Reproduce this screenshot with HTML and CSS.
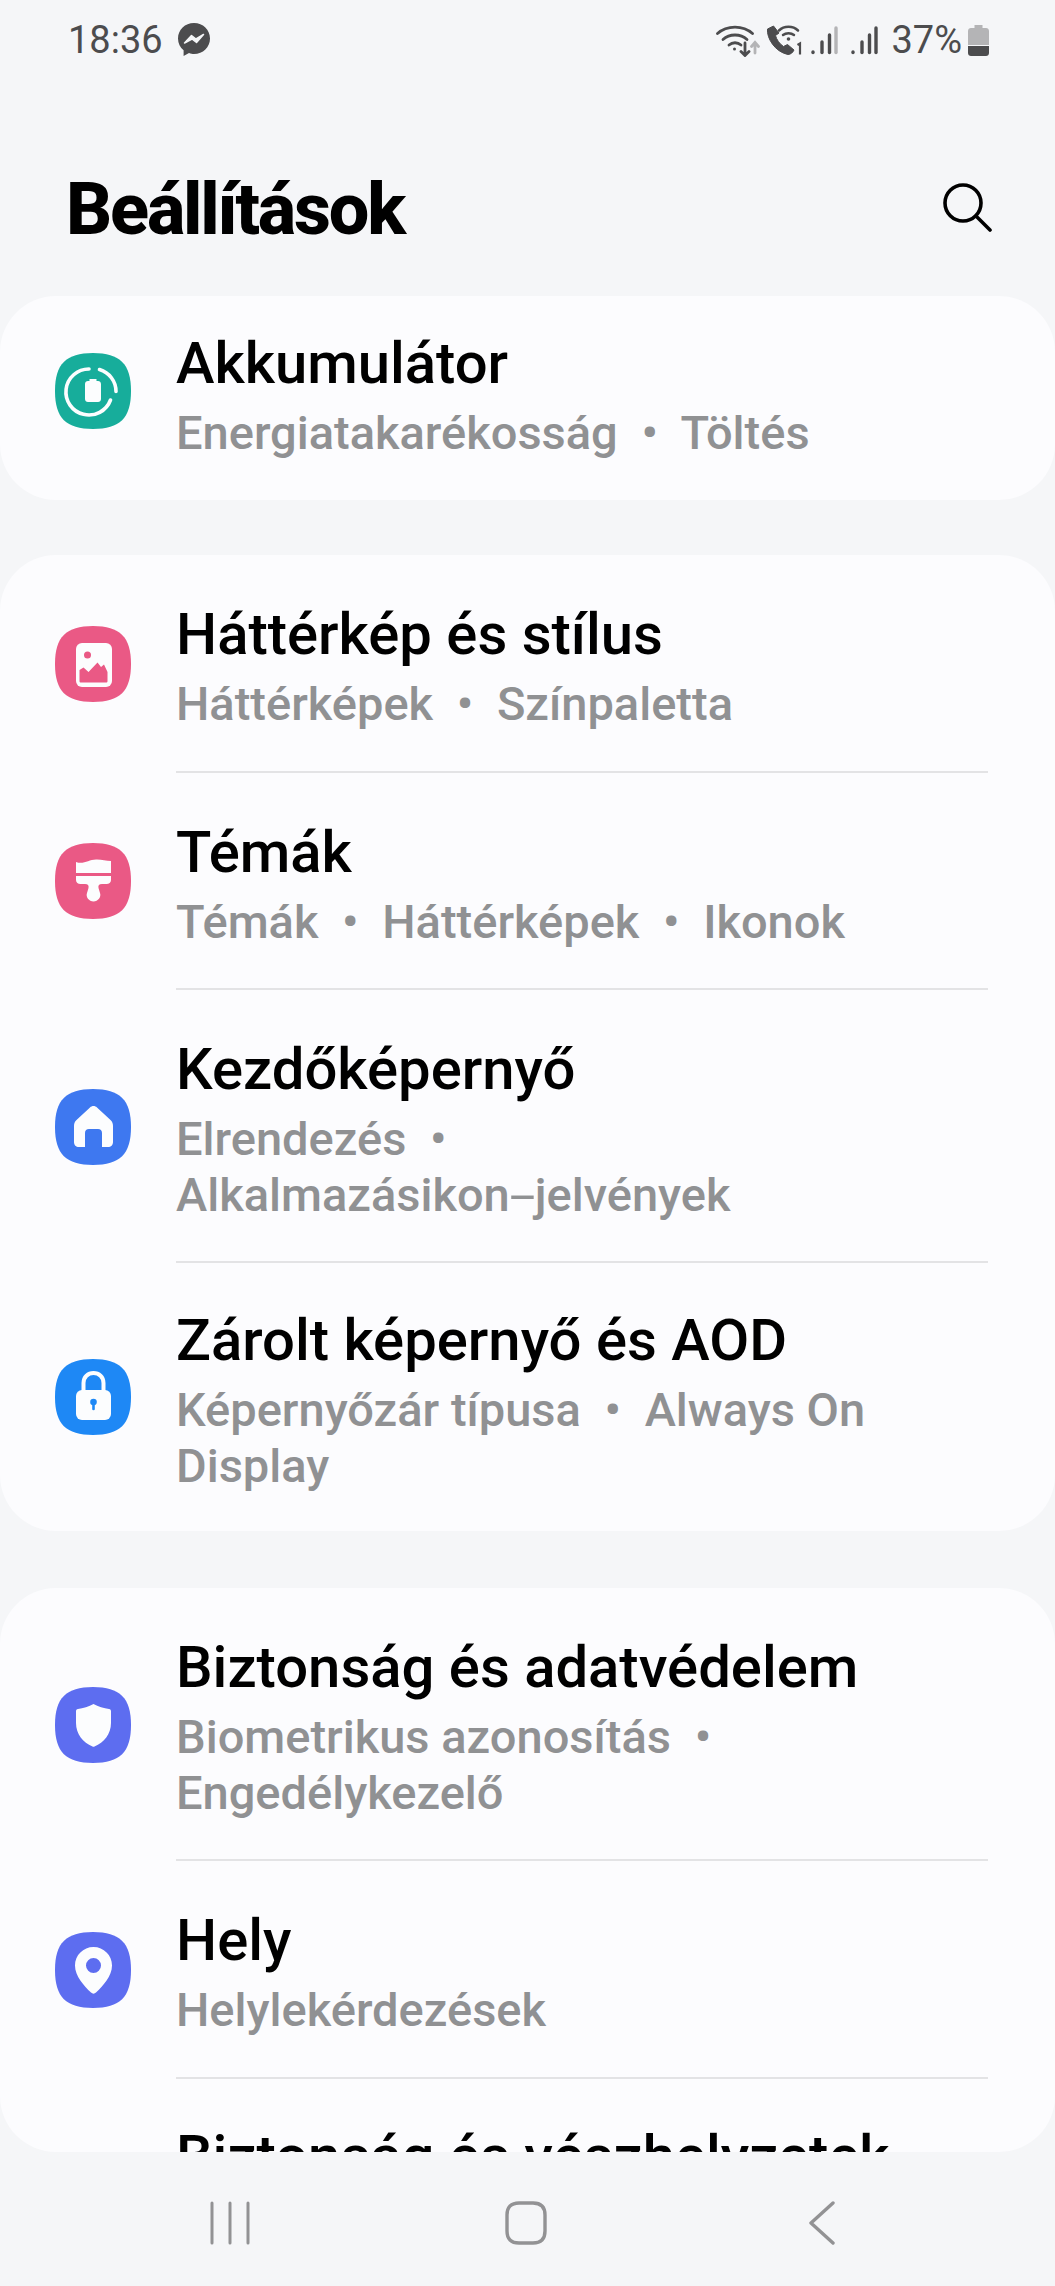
FILE: index.html
```html
<!DOCTYPE html>
<html lang="hu">
<head>
    <meta charset="UTF-8">
    <meta name="viewport" content="width=device-width, initial-scale=1.0">
    <title>Beállítások</title>
    <link rel="stylesheet" href="styles.css">
</head>
<body>
    <svg class="defs"><defs><path id="sq" d="M38 0C65 0 76 11 76 38 76 65 65 76 38 76 11 76 0 65 0 38 0 11 11 0 38 0Z"/></defs></svg>

    <div class="status-bar">
        <div class="status-left">
            <span class="clock">18:36</span>
            <svg class="msg-icon" viewBox="0 0 32 34"><path d="M16 0C7 0 0 6.800 0 15.500 0 20.300 2.200 24.500 5.600 27.300V33L11 30C12.900 30.700 14.400 31 16 31 25 31 32 24.200 32 15.500 32 6.800 25 0 16 0Z" fill="#4c4c4e"/><path d="M6.500 20 13.500 12.500 18 16 25.500 11.500 18.500 19.500 14 16Z" fill="#f5f6f8" stroke="#f5f6f8" stroke-width="1.500" stroke-linejoin="round"/></svg>
        </div>
        <div class="status-right">
            <svg class="wifi-icon" viewBox="0 0 44 33" fill="none" stroke="#4c4c4e" stroke-width="2.800" stroke-linecap="round">
                <path d="M1.500 9.500C11 1 27 1 36.500 9.500"/>
                <path d="M7 15.500C13.500 9.500 24.500 9.500 31 15.500"/>
                <path d="M13 21C16.500 18 21.500 18 25 21"/>
                <circle cx="18.500" cy="25" r="1.500" fill="#4c4c4e" stroke="none"/>
                <path d="M29 19V31M25 27.500 29 31.500 33 27.500"/>
                <path d="M39 29V19M35.500 22.500 39 18.500 42.500 22.500" stroke="#b4b4b6"/>
            </svg>
            <svg class="call-icon" viewBox="0 0 36 30">
                <path d="M7.500 1 1.500 4C.5 13 9 27 22 29.500 24.500 29.500 27 27.500 28 25L21.500 19.500 17.500 21.500C13.500 19 10.500 14.500 9.500 10.500L13 8Z" fill="#4c4c4e" stroke="#4c4c4e" stroke-linejoin="round"/>
                <path d="M13 5.500C18 .5 27 .5 32 5.500M17 10C20 7.500 25 7.500 28 10" fill="none" stroke="#4c4c4e" stroke-width="2.500" stroke-linecap="round"/>
                <circle cx="22.500" cy="14" r="1.800" fill="#4c4c4e"/>
                <path d="M31.500 20 34 18.500V29.500" fill="none" stroke="#4c4c4e" stroke-width="2.200"/>
            </svg>
            <svg class="signal-icon" viewBox="0 0 27 29" stroke-width="3.400" stroke-linecap="round">
                <path d="M2 26.500V26" stroke="#4c4c4e"/>
                <path d="M11 26.500V16" stroke="#4c4c4e"/>
                <path d="M18.500 26.500V9" stroke="#4c4c4e"/>
                <path d="M25 26.500V2" stroke="#b4b4b6"/>
            </svg>
            <svg class="signal-icon" viewBox="0 0 27 29" stroke-width="3.400" stroke-linecap="round">
                <path d="M2 26.500V26" stroke="#4c4c4e"/>
                <path d="M11 26.500V16" stroke="#4c4c4e"/>
                <path d="M18.500 26.500V9" stroke="#4c4c4e"/>
                <path d="M25 26.500V2" stroke="#4c4c4e"/>
            </svg>
            <span class="battery-text">37%</span>
            <svg class="battery-icon" viewBox="0 0 21 31">
                <path d="M6.500 0H14.500V3H18C19.700 3 21 4.300 21 6V20H0V6C0 4.300 1.300 3 3 3H6.500Z" fill="#b4b4b6"/>
                <path d="M0 21H21V28C21 29.700 19.700 31 18 31H3C1.300 31 0 29.700 0 28Z" fill="#4c4c4e"/>
            </svg>
        </div>
    </div>

    <div class="header">
        <h1>Beállítások</h1>
        <svg class="search-icon" viewBox="0 0 50 50" fill="none" stroke="#000" stroke-width="3.600" stroke-linecap="round">
            <circle cx="21" cy="21" r="18"/>
            <path d="M34 34 48 48"/>
        </svg>
    </div>

    <div class="list">
        <div class="card card-single">
            <div class="row">
                <svg class="icon" viewBox="0 0 76 76">
                    <use href="#sq" fill="#17ad9b"/>
                    <path d="M44.500 16.500A23 23 0 0 1 61 38.500M55.500 47A23 23 0 1 1 34 16" fill="none" stroke="#fcfdfe" stroke-width="3.600" stroke-linecap="round"/>
                    <path d="M34.500 26H41.500V28H43C44.700 28 46 29.300 46 31V46C46 47.700 44.700 49 43 49H33C31.300 49 30 47.700 30 46V31C30 29.300 31.300 28 33 28H34.500Z" fill="#fcfdfe"/>
                </svg>
                <div class="row-text">
                    <div class="title">Akkumulátor</div>
                    <div class="sub">Energiatakarékosság <span class="sep">•</span> Töltés</div>
                </div>
            </div>
        </div>

        <div class="card">
            <div class="row">
                <svg class="icon" viewBox="0 0 76 76">
                    <use href="#sq" fill="#ea5985"/>
                    <rect x="21" y="17" width="36" height="44" rx="6" fill="#fcfdfe"/>
                    <circle cx="32.500" cy="29" r="3.500" fill="#ea5985"/>
                    <path d="M24.500 44 28.500 41.500 33.500 46 42.500 36.500 46 41 49 38.500 52.500 46V55C52.500 56 52 56.500 51 56.500H26C25 56.500 24.500 56 24.500 55Z" fill="#ea5985"/>
                </svg>
                <div class="row-text">
                    <div class="title">Háttérkép és stílus</div>
                    <div class="sub">Háttérképek <span class="sep">•</span> Színpaletta</div>
                </div>
            </div>
            <div class="row">
                <svg class="icon" viewBox="0 0 76 76">
                    <use href="#sq" fill="#ea5985"/>
                    <path d="M21 19C29 22 34 16 42 16.500 47 16.500 51 18 56 18V30H21Z" fill="#fcfdfe"/>
                    <path d="M21 33H56V37C56 39.500 54 41 51.500 41H47C44 41 43 42.500 43.500 45L45 50C46.500 54 43 58.500 38.500 58.500 34 58.500 30.500 54 32 50L33.500 45C34 42.500 33 41 30 41H25.500C23 41 21 39.500 21 37Z" fill="#fcfdfe"/>
                </svg>
                <div class="row-text">
                    <div class="title">Témák</div>
                    <div class="sub">Témák <span class="sep">•</span> Háttérképek <span class="sep">•</span> Ikonok</div>
                </div>
            </div>
            <div class="row">
                <svg class="icon" viewBox="0 0 76 76">
                    <use href="#sq" fill="#3e78f0"/>
                    <path d="M35 18.500C37 16.500 40 16.500 42 18.500L55.500 31C57.300 32.700 58 34.500 58 37V53C58 56 56 58 53 58H47V44C47 41.500 45.500 40 43 40H34C31.500 40 30 41.500 30 44V58H24C21 58 19 56 19 53V37C19 34.500 19.700 32.700 21.500 31Z" fill="#fcfdfe"/>
                </svg>
                <div class="row-text">
                    <div class="title">Kezdőképernyő</div>
                    <div class="sub">Elrendezés <span class="sep">•</span> <span class="nobreak">Alkalmazásikon<span class="dash">-</span>jelvények</span></div>
                </div>
            </div>
            <div class="row">
                <svg class="icon" viewBox="0 0 76 76">
                    <use href="#sq" fill="#1e88f5"/>
                    <path d="M28.500 33V24C28.500 18 33 14 38.500 14 44 14 48.500 18 48.500 24V33" fill="none" stroke="#fcfdfe" stroke-width="4"/>
                    <rect x="21" y="31" width="35" height="30" rx="6" fill="#fcfdfe"/>
                    <circle cx="38.500" cy="43" r="3.300" fill="#1e88f5"/>
                    <path d="M38.500 44V50" stroke="#1e88f5" stroke-width="2.600" stroke-linecap="round"/>
                </svg>
                <div class="row-text">
                    <div class="title">Zárolt képernyő és AOD</div>
                    <div class="sub">Képernyőzár típusa <span class="sep">•</span> Always On Display</div>
                </div>
            </div>
        </div>

        <div class="card card-cut">
            <div class="row">
                <svg class="icon" viewBox="0 0 76 76">
                    <use href="#sq" fill="#5d6df0"/>
                    <path d="M38.500 17C43 19.500 49 21.500 54 22 55.500 22.200 56 23 56 24.500V36C56 47 49 55.500 39.500 59.500 38.800 59.800 38.200 59.800 37.500 59.500 28 55.500 21 47 21 36V24.500C21 23 21.500 22.200 23 22 28 21.500 34 19.500 38.500 17Z" fill="#fcfdfe"/>
                </svg>
                <div class="row-text">
                    <div class="title">Biztonság és adatvédelem</div>
                    <div class="sub">Biometrikus azonosítás <span class="sep">•</span> Engedélykezelő</div>
                </div>
            </div>
            <div class="row">
                <svg class="icon" viewBox="0 0 76 76">
                    <use href="#sq" fill="#5d6df0"/>
                    <path fill-rule="evenodd" d="M38.500 15C48.700 15 57 23.200 57 33.500 57 44 48 54 41 60.500 39.500 62 37.500 62 36 60.500 29 54 20 44 20 33.500 20 23.200 28.300 15 38.500 15ZM38.500 26A7.500 7.500 0 1 0 38.500 41 7.500 7.500 0 1 0 38.500 26Z" fill="#fcfdfe"/>
                </svg>
                <div class="row-text">
                    <div class="title">Hely</div>
                    <div class="sub">Helylekérdezések</div>
                </div>
            </div>
            <div class="row">
                <div class="row-text row-text-offset">
                    <div class="title">Biztonság és vészhelyzetek</div>
                </div>
            </div>
        </div>
    </div>

    <div class="nav-bar">
        <div class="nav-item">
            <svg width="40" height="44" viewBox="0 0 40 44" fill="none" stroke="#929294" stroke-width="3" stroke-linecap="round">
                <path d="M2 2V42M20 2V42M38 2V42"/>
            </svg>
        </div>
        <div class="nav-item">
            <svg width="42" height="44" viewBox="0 0 42 44" fill="none" stroke="#929294" stroke-width="3.400">
                <path d="M14 2H28C36 2 40 6 40 14V30C40 38 36 42 28 42H14C6 42 2 38 2 30V14C2 6 6 2 14 2Z"/>
            </svg>
        </div>
        <div class="nav-item">
            <svg width="26" height="44" viewBox="0 0 26 44" fill="none" stroke="#929294" stroke-width="3.400" stroke-linecap="round" stroke-linejoin="round">
                <path d="M24 2 2 22 24 42"/>
            </svg>
        </div>
    </div>
</body>
</html>
```

FILE: styles.css
```css
* {
    margin: 0;
    padding: 0;
    box-sizing: border-box;
}
html, body {
    height: 2286px;
}
body {
    font-family: Roboto, "Noto Sans", sans-serif;
    background-color: #f5f6f8;
    color: #000;
    display: flex;
    flex-direction: column;
    overflow: hidden;
}
.defs {
    display: none;
}
.status-bar {
    height: 80px;
    padding: 0 66px 0 68px;
    display: flex;
    justify-content: space-between;
    align-items: center;
    color: #4c4c4e;
}
.status-left {
    display: flex;
    align-items: center;
    gap: 15px;
}
.clock {
    font-size: 38px;
}
.msg-icon {
    width: 32px;
    height: 34px;
}
.status-right {
    display: flex;
    align-items: center;
    gap: 6px;
}
.wifi-icon {
    width: 44px;
    height: 33px;
}
.call-icon {
    width: 36px;
    height: 30px;
    margin-right: 3px;
}
.signal-icon {
    width: 27px;
    height: 29px;
    margin-right: 7px;
}
.battery-text {
    font-size: 38px;
}
.battery-icon {
    width: 21px;
    height: 31px;
}
.header {
    height: 216px;
    padding: 99px 63px 0 66px;
    display: flex;
    justify-content: space-between;
    align-items: flex-start;
}
.header h1 {
    font-size: 72px;
    font-weight: 800;
    line-height: 62px;
    letter-spacing: -2.200px;
}
.search-icon {
    width: 50px;
    height: 50px;
    margin-top: 3px;
}
.list {
    height: 1856px;
    display: flex;
    flex-direction: column;
    gap: 55px;
}
.card {
    background-color: #fcfcfe;
    border-radius: 56px;
}
.card-single {
    height: 204px;
}
.card-cut {
    flex: 1;
    margin-top: 2px;
    overflow: hidden;
}
.row {
    display: flex;
    align-items: center;
    padding: 0 67px 0 55px;
    gap: 45px;
}
.icon {
    width: 76px;
    height: 76px;
    flex-shrink: 0;
}
.row-text {
    flex: 1;
    padding: 49px 0 39px;
    border-bottom: 2px solid #e3e3e5;
}
.row:last-child .row-text {
    border-bottom: none;
    padding: 47px 0 38px;
}
.card-single .row:last-child .row-text {
    padding: 37px 0 26px;
}
.row-text-offset {
    margin-left: 121px;
}
.title {
    font-size: 58px;
    font-weight: 500;
    line-height: 60px;
    margin-bottom: 12px;
}
.sub {
    font-size: 47px;
    font-weight: 500;
    line-height: 55.500px;
    color: #909193;
}
.sep {
    margin: 0 12px;
}
.nobreak {
    white-space: nowrap;
}
.dash {
    display: inline-block;
    margin: 0 6px;
    font-weight: 400;
    transform: scaleX(2);
}
.nav-bar {
    height: 134px;
    display: flex;
    justify-content: center;
    align-items: flex-start;
    padding: 49px 4px 0 0;
}
.nav-item {
    width: 296px;
    display: flex;
    justify-content: center;
}
```
